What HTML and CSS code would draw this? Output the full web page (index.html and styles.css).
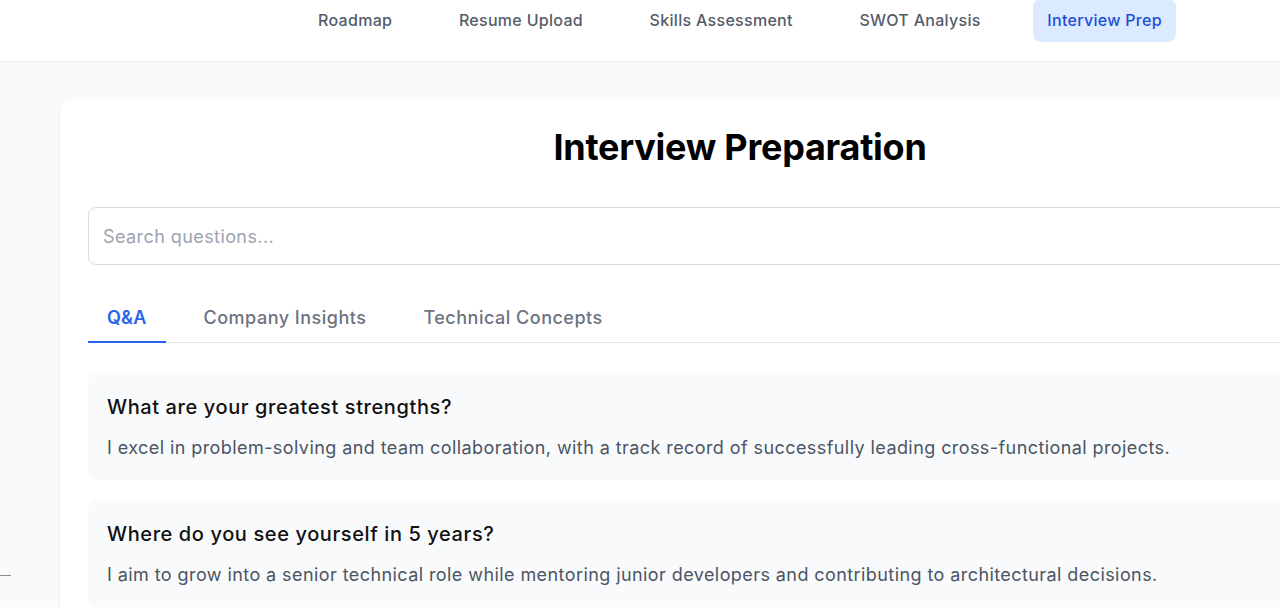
FILE: index.html
```html
<!DOCTYPE html>
<html lang="en">
<head>
<meta charset="utf-8">
<title>Interview Preparation</title>
<link rel="stylesheet" href="styles.css">
</head>
<body>
<div class="page">
  <header class="topbar">
    <nav class="nav">
      <a class="nav-item">Roadmap</a>
      <a class="nav-item">Resume Upload</a>
      <a class="nav-item">Skills Assessment</a>
      <a class="nav-item">SWOT Analysis</a>
      <a class="nav-item active">Interview Prep</a>
    </nav>
  </header>
  <main class="main">
    <span class="edge-dash"></span>
    <section class="card">
      <h1 class="title">Interview Preparation</h1>
      <input class="search" type="text" placeholder="Search questions...">
      <div class="tabs">
        <button class="tab active">Q&amp;A</button>
        <button class="tab">Company Insights</button>
        <button class="tab">Technical Concepts</button>
      </div>
      <div class="qa-list">
        <article class="qa">
          <h3 class="q">What are your greatest strengths?</h3>
          <p class="a">I excel in problem-solving and team collaboration, with a track record of successfully leading cross-functional projects.</p>
        </article>
        <article class="qa">
          <h3 class="q">Where do you see yourself in 5 years?</h3>
          <p class="a">I aim to grow into a senior technical role while mentoring junior developers and contributing to architectural decisions.</p>
        </article>
      </div>
    </section>
  </main>
</div>
</body>
</html>
```
FILE: styles.css
```css
html, body {
  margin: 0;
  padding: 0;
  overflow: hidden;
  background: #f9fafb;
  font-family: Inter, "Noto Sans", sans-serif;
}
.page {
  width: 1480px;
  min-height: 607px;
  background: #f9fafb;
}
.topbar {
  height: 61px;
  background: #ffffff;
  border-bottom: 1px solid #eef0f2;
  display: flex;
  justify-content: center;
  align-items: flex-start;
}
.nav {
  display: flex;
  gap: 38.6px;
}
.nav-item {
  padding: 9px 14px 9px;
  margin-top: -1px;
  line-height: 24px;
  font-size: 16px;
  font-weight: 500;
  letter-spacing: 0.3px;
  color: #545c69;
  border-radius: 8px;
  text-decoration: none;
}
.nav-item.active {
  background: #dbeafe;
  color: #1d4ed8;
  padding-bottom: 10px;
}
.main {
  position: relative;
  padding: 37px 60px 0;
}
.edge-dash {
  position: absolute;
  left: 0;
  top: 513px;
  width: 11px;
  height: 1px;
  background: #8a8a8a;
}
.card {
  background: #ffffff;
  border-radius: 12px;
  box-shadow: 0 1px 3px rgba(0,0,0,0.06), 0 1px 2px rgba(0,0,0,0.03);
  padding: 28px 28px 40px;
}
.title {
  margin: 0 0 40px;
  text-align: center;
  font-size: 36px;
  line-height: 40px;
  font-weight: 700;
  letter-spacing: -0.25px;
  color: #000;
}
.search {
  display: block;
  box-sizing: border-box;
  width: 100%;
  height: 58px;
  padding: 0 14px;
  border: 1px solid #d9dbdf;
  border-radius: 8px;
  font-family: inherit;
  font-size: 18px;
  letter-spacing: 0.42px;
  color: #111827;
  outline: none;
}
.search::placeholder {
  color: #9ca3af;
}
.tabs {
  margin-top: 30px;
  display: flex;
  gap: 19px;
  border-bottom: 1px solid #e5e7eb;
}
.tab {
  background: none;
  border: none;
  border-bottom: 2px solid transparent;
  margin-bottom: -1px;
  padding: 11px 19px 11px;
  font-family: inherit;
  font-size: 18px;
  line-height: 24px;
  font-weight: 500;
  letter-spacing: 0.5px;
  color: #6b7280;
}
.tab.active {
  color: #2563eb;
  font-weight: 600;
  letter-spacing: 0.2px;
  border-bottom-color: #2563eb;
}
.qa-list {
  margin-top: 30px;
  display: flex;
  flex-direction: column;
  gap: 20px;
}
.qa {
  background: #f9fafb;
  border-radius: 8px;
  padding: 20px 19px 18px;
}
.q {
  margin: 0 0 13px;
  font-size: 20px;
  line-height: 28px;
  font-weight: 500;
  letter-spacing: 0.6px;
  color: #111111;
}
.a {
  margin: 0;
  font-size: 18px;
  line-height: 28px;
  letter-spacing: 0.42px;
  color: #4b5563;
}
```
